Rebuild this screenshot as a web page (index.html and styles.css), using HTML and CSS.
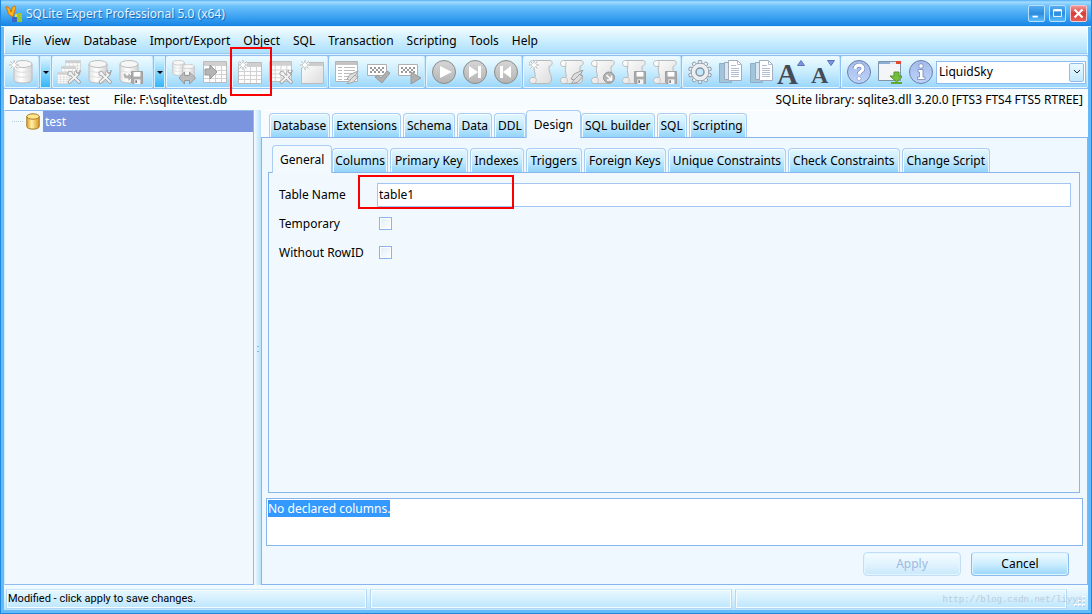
FILE: index.html
```html
<!DOCTYPE html>
<html lang="en">
<head>
<meta charset="utf-8">
<title>SQLite Expert Professional 5.0 (x64)</title>
<link rel="stylesheet" href="styles.css">
</head>
<body>
<svg class="defs" aria-hidden="true">
  <defs>
    <linearGradient id="steel" x1="0" x2="1" y1="0" y2="1"><stop offset="0" stop-color="#fff"/><stop offset="1" stop-color="#dcdcdc"/></linearGradient>
    <linearGradient id="metal" x1="0" x2="1" y1="0" y2="0"><stop offset="0" stop-color="#e2e2e2"/><stop offset=".4" stop-color="#fff"/><stop offset="1" stop-color="#d4d4d4"/></linearGradient>
    <linearGradient id="gold" x1="0" x2="1" y1="0" y2="0"><stop offset="0" stop-color="#e0a52e"/><stop offset=".4" stop-color="#fff0a8"/><stop offset="1" stop-color="#d9971c"/></linearGradient>
    <linearGradient id="round" x1="0" x2="0" y1="0" y2="1"><stop offset="0" stop-color="#d6d6d6"/><stop offset="1" stop-color="#b4b4b4"/></linearGradient>
    <linearGradient id="blue" x1="0" x2="0" y1="0" y2="1"><stop offset="0" stop-color="#a4bbea"/><stop offset="1" stop-color="#bdd3fa"/></linearGradient>
  </defs>
  <symbol id="spark" viewBox="0 0 10 10"><circle cx="5" cy="5" r="4.500" fill="#eef4f6"/><path d="M5 0v10M0 5h10M1.500 1.500l7 7M8.500 1.500l-7 7" stroke="#b4b8ba" stroke-width="1"/><circle cx="5" cy="5" r="2" fill="#fff"/></symbol>
  <symbol id="cyl" viewBox="0 0 20 24" preserveAspectRatio="none"><path d="M1 4v16c0 4 18 4 18 0V4z" fill="url(#metal)" stroke="#bcbcbc"/><ellipse cx="10" cy="4" rx="9" ry="3.500" fill="#f6f6f6" stroke="#bcbcbc"/><path d="M1.500 10c2 3 15 3 17 0M1.500 15c2 3 15 3 17 0" fill="none" stroke="#dcdcdc"/></symbol>
  <symbol id="tools" viewBox="0 0 14 14"><path d="M4 4l8 8M11 4l-8.500 8" stroke="#a0a0a0" stroke-width="3.600" stroke-linecap="round"/><path d="M1 2l3-1 2 3-2 2-3-1zM13 2l-2 2-2-2 1-1.500c-3 0-3 3-2 4.500 2 1 5 0 5-5z" fill="#eee" stroke="#a0a0a0" stroke-width=".8"/><path d="M4 4l8 8M10.500 4.500l-8 7.500" stroke="#f2f2f2" stroke-width="1.800" stroke-linecap="round"/></symbol>
  <symbol id="grid" viewBox="0 0 24 22" preserveAspectRatio="none"><path d="M.5.500h23v21H.5z" fill="#fdfdfd" stroke="#bcbcbc"/><path d="M1 1h22v4H1z" fill="#cfcfcf"/><path d="M1 9.500h22M1 13.500h22M1 17.500h22M6.500 1v20M12.500 1v20M18.500 1v20" stroke="#d2d2d2"/></symbol>
  <symbol id="floppy" viewBox="0 0 14 14" preserveAspectRatio="none"><path d="M.5.500h13v13H2l-1.500-1.500z" fill="#aaa" stroke="#999"/><path d="M3 1h8v5H3z" fill="#fff"/><path d="M4 9h7v5H4z" fill="#f4f4f4"/><path d="M5 10h2v3H5z" fill="#888"/></symbol>
  <symbol id="scroll" viewBox="0 0 24 24"><path d="M3.500.500H21c3 0 3 5-.5 5.500-2 4 2 9 2 13 0 3-2 4.500-4 4.500H3.500c-4 0-4-6 0-6H6C7 14 4 10 6 6.500H3.500c-4 0-4-6 0-6z" fill="url(#steel)" stroke="#b8b8b8"/><path d="M3.500 6.500c3 0 3-3 2-5M5 17.500c3 0 3 4 1 6" fill="none" stroke="#c4c4c4"/></symbol>
  <symbol id="bolt" viewBox="0 0 14 14"><path d="M13 0L4 4 1 9l3 1-3 4 7-2 5-6-3-1z" fill="#dedede" stroke="#a0a0a0"/><path d="M4 10l6-6" stroke="#a0a0a0"/></symbol>
  <symbol id="keys" viewBox="0 0 20 12"><path d="M.5.500h19v11H.5z" fill="#fff" stroke="#b0b0b0"/><path d="M3 4h14M3 8h14" stroke="#999" stroke-width="2" stroke-dasharray="2 2"/><path d="M5 6h12" stroke="#999" stroke-width="2" stroke-dasharray="2 2"/></symbol>
  <symbol id="copy" viewBox="0 0 24 24"><path d="M.5 3.500h12v19H.5z" fill="#a3c5dc" stroke="#8eaec5"/><path d="M5.500 2.500h11v17h-11z" fill="#dbe7f5" stroke="#9ca9bb"/><path d="M9.500.500h9l4 4v16h-13z" fill="#fff" stroke="#a3adbd"/><path d="M18.500.500v4h4M12 5.500h5M12 8.500h8M12 10.500h8M12 12.500h8M12 14.500h8M12 16.500h8" fill="none" stroke="#b3bdd6"/></symbol>
</svg>

<div class="window">
  <header class="titlebar">
    <svg class="logo" viewBox="0 0 18 18" aria-hidden="true"><path d="M1 2c3-1 4 2 5 5 1-3 1-6 4-6 2 2-1 5-1 8 0 2-1 3-3 2-3-1-3-5-5-9z" fill="#fcb51c" stroke="#d36c08"/><path d="M7 12h5v5H7z" fill="#3868c8"/><path d="M12 8h5v9h-5z" fill="#98c832"/><path d="M10 9h2v3h-2z" fill="#e7dc3d"/></svg>
    <h1>SQLite Expert Professional 5.0 (x64)</h1>
    <div class="winbtns">
      <button class="winbtn" aria-label="Minimize"><svg viewBox="0 0 17 17"><path d="M4 11h6v2H4z" fill="#fff"/></svg></button>
      <button class="winbtn" aria-label="Maximize"><svg viewBox="0 0 17 17"><path d="M4 5h9v7H4zM4 4h9" fill="none" stroke="#fff"/><path d="M4 4h9v2H4z" fill="#fff"/></svg></button>
      <button class="winbtn close" aria-label="Close"><svg viewBox="0 0 17 17"><path d="M4 4l9 9M13 4l-9 9" stroke="#fff" stroke-width="2.500"/></svg></button>
    </div>
  </header>

  <nav class="menubar">
    <button>File</button><button>View</button><button>Database</button><button>Import/Export</button><button>Object</button><button>SQL</button><button>Transaction</button><button>Scripting</button><button>Tools</button><button>Help</button>
  </nav>

  <div class="toolbar">
    <div class="group"><button class="tool" aria-label="New database"><svg viewBox="0 0 24 24"><use href="#cyl" x="4" width="20" height="24"/><use href="#spark" width="10" height="10"/></svg></button></div>
    <button class="drop" aria-label="More databases"></button>
    <div class="group wide">
      <button class="tool" aria-label="Close all"><svg viewBox="0 0 24 24"><use href="#grid" x="8" width="16" height="14"/><use href="#grid" x="4" y="6" width="15" height="13"/><use href="#grid" x="0" y="12" width="13" height="12"/><use href="#tools" x="10" y="10" width="14" height="14"/></svg></button>
      <button class="tool" aria-label="Close database"><svg viewBox="0 0 24 24"><use href="#cyl" width="20" height="24"/><use href="#tools" x="10" y="10" width="14" height="14"/></svg></button>
      <button class="tool" aria-label="Backup database"><svg viewBox="0 0 24 24"><use href="#cyl" width="20" height="24"/><path d="M4 13c0 5 1 6 5 6v3l5-5-5-5v3c-2 0-2 0-2-2z" fill="#b5b5b5" stroke="#fff"/><use href="#floppy" x="12" y="11" width="12" height="13"/></svg></button>
    </div>
    <button class="drop" aria-label="More backup options"></button>
    <div class="group">
      <button class="tool" aria-label="Transfer data"><svg viewBox="0 0 24 24"><use href="#cyl" width="13" height="16"/><use href="#cyl" x="10" y="4" width="13" height="15"/><path d="M7 18l5.500-6v3.500h5V12l6 6-6 6v-3.500h-5V24z" fill="#bdbdbd" stroke="#999"/></svg></button>
      <button class="tool" aria-label="Import table"><svg viewBox="0 0 24 24"><use href="#grid" y="1" width="24" height="22"/><path d="M2 9h5V5l7 7-7 7v-4H2z" fill="#b5b5b5" stroke="#999"/></svg></button>
    </div>
    <div class="group">
      <button class="tool" aria-label="New table"><svg viewBox="0 0 24 24"><use href="#grid" y="2" width="24" height="22"/><use href="#spark" width="10" height="10"/></svg></button>
      <button class="tool" aria-label="Delete table"><svg viewBox="0 0 24 24"><use href="#grid" y="1" width="23" height="21"/><use href="#tools" x="10" y="10" width="14" height="14"/></svg></button>
      <button class="tool" aria-label="New view"><svg viewBox="0 0 24 24"><path d="M1.500 2.500h22v21h-22z" fill="url(#steel)" stroke="#bcbcbc"/><path d="M2 3h21v3H2z" fill="#cdcdcd"/><use href="#spark" width="10" height="10"/></svg></button>
      <span class="mark mark-tool" aria-hidden="true"></span>
    </div>
    <div class="group">
      <button class="tool" aria-label="Edit data"><svg viewBox="0 0 24 24"><path d="M.5 1.500h22v20H.5z" fill="#fff" stroke="#b4b4b4"/><path d="M1 2h21v3H1z" fill="#c4c4c4"/><path d="M3 7.500h4M9 7.500h11M3 10.500h4M9 10.500h11M3 13.500h4M9 13.500h11M3 16.500h4M9 16.500h6M3 19.500h4M9 19.500h3" stroke="#bcbcbc"/><use href="#bolt" x="11" y="11" width="13" height="13"/></svg></button>
      <button class="tool" aria-label="Check query"><svg viewBox="0 0 24 24"><use href="#keys" x="1" y="4" width="20" height="12"/><path d="M9 17l3-2 3 3 6-7 3 2-8 10z" fill="#b0b0b0" stroke="#999"/></svg></button>
      <button class="tool" aria-label="Run query"><svg viewBox="0 0 24 24"><use href="#keys" x="1" y="4" width="20" height="12"/><path d="M14 12l10 6-10 6z" fill="#b0b0b0" stroke="#999"/></svg></button>
    </div>
    <div class="group">
      <button class="tool" aria-label="Run"><svg viewBox="0 0 24 24"><circle cx="12" cy="12" r="11.500" fill="url(#round)" stroke="#8c8c8c"/><path d="M8 6l12 6-12 6z" fill="#fff"/></svg></button>
      <button class="tool" aria-label="Commit"><svg viewBox="0 0 24 24"><circle cx="12" cy="12" r="11.500" fill="url(#round)" stroke="#8c8c8c"/><path d="M6 6l9 6-9 6zM15 6h3v12h-3z" fill="#fff"/></svg></button>
      <button class="tool" aria-label="Roll back"><svg viewBox="0 0 24 24"><circle cx="12" cy="12" r="11.500" fill="url(#round)" stroke="#8c8c8c"/><path d="M17 6l-8 6 8 6zM6 6h3v12H6z" fill="#fff"/></svg></button>
    </div>
    <div class="group">
      <button class="tool" aria-label="New script"><svg viewBox="0 0 24 24"><use href="#scroll" width="24" height="24"/><use href="#spark" width="10" height="10"/></svg></button>
      <button class="tool" aria-label="Execute script"><svg viewBox="0 0 24 24"><use href="#scroll" width="24" height="24"/><use href="#bolt" x="10" y="10" width="14" height="14"/></svg></button>
      <button class="tool" aria-label="Load script"><svg viewBox="0 0 24 24"><use href="#scroll" width="24" height="24"/><circle cx="18" cy="17.500" r="5.500" fill="#b4b4b4" stroke="#949494"/><path d="M15.500 15l4.500 4.500M20.500 15.500v4.500H16" fill="none" stroke="#fff" stroke-width="1.500"/></svg></button>
      <button class="tool" aria-label="Save script"><svg viewBox="0 0 24 24"><use href="#scroll" width="24" height="24"/><use href="#floppy" x="12" y="11" width="12" height="13"/></svg></button>
      <button class="tool" aria-label="Save script as"><svg viewBox="0 0 24 24"><use href="#scroll" width="24" height="24"/><use href="#floppy" x="12" y="11" width="12" height="13"/></svg></button>
    </div>
    <div class="group">
      <button class="tool" aria-label="Options"><svg viewBox="0 0 24 24"><g fill="#eceff2" stroke="#8e99a5" stroke-width=".9"><path id="tooth" d="M10 4l.5-3.500h3L14 4z"/><use href="#tooth" transform="rotate(36 12 12)"/><use href="#tooth" transform="rotate(72 12 12)"/><use href="#tooth" transform="rotate(108 12 12)"/><use href="#tooth" transform="rotate(144 12 12)"/><use href="#tooth" transform="rotate(180 12 12)"/><use href="#tooth" transform="rotate(216 12 12)"/><use href="#tooth" transform="rotate(252 12 12)"/><use href="#tooth" transform="rotate(288 12 12)"/><use href="#tooth" transform="rotate(324 12 12)"/><circle cx="12" cy="12" r="8.700"/></g><circle cx="12" cy="12" r="8.200" fill="#eceff2"/><circle cx="12" cy="12" r="4" fill="#c4e8fc" stroke="#8792a0" stroke-width="1.500"/></svg></button>
      <button class="tool" aria-label="Copy"><svg viewBox="0 0 24 24"><use href="#copy" width="24" height="24"/></svg></button>
      <button class="tool" aria-label="Duplicate"><svg viewBox="0 0 24 24"><use href="#copy" width="24" height="24"/></svg></button>
      <button class="tool font-btn" aria-label="Larger font"><span class="big-a">A</span><svg class="tri" viewBox="0 0 8 6"><path d="M4 .5l3.500 5h-7z" fill="#7d94dd" stroke="#5a72bc"/></svg></button>
      <button class="tool font-btn" aria-label="Smaller font"><span class="small-a">A</span><svg class="tri" viewBox="0 0 8 6"><path d="M4 5.500l3.500-5h-7z" fill="#7d94dd" stroke="#5a72bc"/></svg></button>
    </div>
    <div class="group last">
      <button class="tool" aria-label="Help"><svg viewBox="0 0 24 24"><circle cx="12" cy="12" r="11.500" fill="url(#blue)" stroke="#6980ab"/><path d="M8 9c0-5 8-5 8-.5 0 3-4 2.500-4 6" fill="none" stroke="#7088b8" stroke-width="4.500"/><path d="M8 9c0-5 8-5 8-.5 0 3-4 2.500-4 6" fill="none" stroke="#fff" stroke-width="3.200"/><circle cx="12" cy="18.500" r="2" fill="#fff" stroke="#7088b8" stroke-width=".5"/></svg></button>
      <button class="tool" aria-label="Check for updates"><svg viewBox="0 0 24 24"><path d="M.5 1.500h22v19H.5z" fill="#f3f5f9" stroke="#8294aa"/><path d="M1 2h21v2H1z" fill="#8eacd8"/><path d="M12 2h3v2h-3zM15 2h3v2h-3z" fill="#dfe8f6"/><path d="M18 1h5v3h-5z" fill="#e14a30"/><path d="M16 12h5v4h4l-6.500 6L12 16h4z" fill="#74bd3d" stroke="#4e972a"/><path d="M13 22h11v2H13z" fill="#63a832"/></svg></button>
      <button class="tool" aria-label="About"><svg viewBox="0 0 24 24"><circle cx="12" cy="12" r="11.500" fill="url(#blue)" stroke="#6980ab"/><path d="M9 9.500h5V17h2v2.500H8.500V17h2v-5H9z" fill="#fff" stroke="#7088b8" stroke-width=".8"/><circle cx="12" cy="6" r="2.300" fill="#fff" stroke="#7088b8" stroke-width=".8"/></svg></button>
      <div class="combo">
        <select aria-label="Skin"><option>LiquidSky</option></select>
        <span class="combo-arrow" aria-hidden="true"><svg viewBox="0 0 8 6"><path d="M1 1l3 3 3-3" fill="none" stroke="#222"/></svg></span>
      </div>
    </div>
  </div>

  <div class="info"><span>Database: test</span><span>File: F:\sqlite\test.db</span><span class="lib">SQLite library: sqlite3.dll 3.20.0 [FTS3 FTS4 FTS5 RTREE]</span></div>

  <main class="body">
    <aside class="tree">
      <div class="node"><span class="branch"></span><svg class="dbicon" viewBox="0 0 14 17" aria-hidden="true"><path d="M.8 3.500v10c0 3.500 12.400 3.500 12.400 0v-10z" fill="url(#gold)" stroke="#a87820"/><ellipse cx="7" cy="3.500" rx="6.200" ry="2.700" fill="#ffe68c" stroke="#a87820"/></svg><span class="node-label">test</span></div>
    </aside>
    <div class="splitter"></div>
    <section class="content">
      <div class="tabs main-tabs" role="tablist">
        <button class="tab" role="tab">Database</button><button class="tab" role="tab">Extensions</button><button class="tab" role="tab">Schema</button><button class="tab" role="tab">Data</button><button class="tab" role="tab">DDL</button><button class="tab active" role="tab" aria-selected="true">Design</button><button class="tab" role="tab">SQL builder</button><button class="tab" role="tab">SQL</button><button class="tab" role="tab">Scripting</button>
      </div>
      <div class="design">
        <div class="tabs sub-tabs" role="tablist">
          <button class="tab active" role="tab" aria-selected="true">General</button><button class="tab" role="tab">Columns</button><button class="tab" role="tab">Primary Key</button><button class="tab" role="tab">Indexes</button><button class="tab" role="tab">Triggers</button><button class="tab" role="tab">Foreign Keys</button><button class="tab" role="tab">Unique Constraints</button><button class="tab" role="tab">Check Constraints</button><button class="tab" role="tab">Change Script</button>
        </div>
        <form class="general">
          <div class="row"><label for="tname">Table Name</label><div class="field"><input id="tname" type="text" value="table1"><span class="mark mark-name" aria-hidden="true"></span></div></div>
          <div class="row"><label for="temp">Temporary</label><input id="temp" type="checkbox"></div>
          <div class="row"><label for="norow">Without RowID</label><input id="norow" type="checkbox"></div>
        </form>
        <div class="messages"><span>No declared columns.</span></div>
        <div class="actions"><button class="btn" disabled>Apply</button><button class="btn">Cancel</button></div>
      </div>
    </section>
  </main>

  <footer class="status"><div>Modified - click apply to save changes.</div><div></div><div></div>
    <svg class="grip" viewBox="0 0 12 12" aria-hidden="true"><path d="M8 1h3M4 5h3M8 5h3M0 9h3M4 9h3M8 9h3" stroke="#fff" stroke-width="2"/><path d="M9 2h2M5 6h2M9 6h2M1 10h2M5 10h2M9 10h2" stroke="#8bbfea" stroke-width="1"/></svg>
    <span class="watermark">http://blog.csdn.net/liyys</span>
  </footer>
</div>
</body>
</html>
```
FILE: styles.css
```css
* { box-sizing: border-box; }
body { margin: 0; font: 12px/16px "Noto Sans", "Open Sans", sans-serif; color: #000; }
button, input, select { font: inherit; color: inherit; margin: 0; }
button { border: 0; background: none; padding: 0; white-space: nowrap; }
.defs { position: absolute; width: 0; height: 0; }

.window { height: 100vh; display: flex; flex-direction: column; border: solid #1f87dd; border-width: 0 1px 1px; box-shadow: inset 0 0 0 3px #64bbfb; padding: 0 3px 3px; background: #f7fcff; overflow: hidden; }

.titlebar { height: 27px; flex: none; margin: 0 -3px; display: flex; align-items: center; gap: 3px; padding: 0 4px; background: linear-gradient(#52aef5 0, #a3dcff 2px, #6cc1fb 6px, #389ff0 18px, #1684e6 26px, #d9f3ff 26px); }
.logo { width: 18px; height: 18px; }
.titlebar h1 { flex: 1; margin: 0; font-size: 12px; font-weight: 400; color: #e2f3ff; text-shadow: 1px 1px 1px #1263ae; }
.winbtns { display: flex; gap: 4px; }
.winbtn { width: 17px; height: 17px; border: 1px solid #b6e0ff; border-radius: 2px; background: linear-gradient(#55adf2, #2c8ce0 50%, #58bdf8); }
.winbtn svg { display: block; width: 15px; height: 15px; }
.winbtn.close { border-color: #f5c8cc; background: linear-gradient(#f09a98, #d93a35 50%, #e8605a); }

.menubar { height: 27px; flex: none; display: flex; align-items: center; gap: 13px; padding: 1px 7px 0; border: 1px solid #fff; border-bottom-color: #9cc8f2; background: linear-gradient(#f0fbff, #cdeefe 50%, #abdffc); }

.toolbar { height: 35px; flex: none; display: flex; align-items: stretch; padding: 1px 0; gap: 1px; background: #8fc0f1; border-top: 1px solid #d9f1ff; }
.group { position: relative; display: flex; align-items: center; padding: 0 0 0 1px; border: 1px solid #e6f7ff; border-right-color: #c6e9ff; border-radius: 2px; background: linear-gradient(#eefbff, #c9ecfe 50%, #9bd7fb); }
.group:first-child { padding: 0 2px 0 0; }
.group.wide { padding: 0 6px 0 0; }
.group.last { flex: 1; padding-right: 1px; }
.tool { width: 31px; height: 30px; display: grid; place-items: center; }
.tool svg { width: 24px; height: 24px; }
.drop { width: 11px; display: grid; place-items: center; border: 1px solid #d0f0ff; background: linear-gradient(#dff6ff, #86d5fc 50%, #35b6fa); }
.drop::before { content: ""; border: 3px solid transparent; border-top-color: #000; border-bottom: 0; }
.font-btn { display: flex; justify-content: flex-start; align-items: baseline; color: #444b57; font-family: "Liberation Serif", serif; font-weight: 700; }
.tool.font-btn .tri { width: 8px; height: 6px; align-self: flex-start; margin: 3px 0 0 -1px; }
.big-a { font-size: 29px; line-height: 34px; }
.small-a { font-size: 24px; line-height: 37px; margin-left: 3px; }
.combo { position: relative; flex: 1; height: 23px; }
.combo select { width: 100%; height: 23px; appearance: none; padding: 0 20px 0 2px; border: 1px solid #8fbcf0; border-radius: 0; background: #fff; }
.combo-arrow { position: absolute; top: 2px; right: 2px; width: 15px; height: 19px; display: grid; place-items: center; border: 1px solid #8fbcf0; border-radius: 2px; background: linear-gradient(#eafaff, #c2e8fe); pointer-events: none; }
.combo-arrow svg { width: 8px; height: 6px; }

.info { height: 21px; flex: none; display: flex; align-items: center; gap: 24px; padding: 0 5px; }
.info .lib { margin-left: auto; }

.body { flex: 1; min-height: 0; display: grid; grid-template-columns: 250px 7px 1fr; background: #f0f8ff; }
.tree { border: 1px solid #8fbcf0; border-left-color: #d0e8fb; background: #f1f9ff; }
.node { display: flex; align-items: center; height: 21px; gap: 3px; }
.branch { width: 11px; margin-left: 7px; border-top: 1px dotted #b5cfe2; }
.node .dbicon { width: 14px; height: 17px; }
.node-label { flex: 1; height: 21px; padding: 2px; line-height: 17px; background: #7b95df; color: #fff; }
.splitter { background: linear-gradient(90deg, #f3fbff, #b9e1fb); }
.splitter::before { content: ""; display: block; height: 4px; width: 2px; margin: 236px 3px 0; border-top: 1px solid #7fb8e8; border-bottom: 1px solid #7fb8e8; }

.content { min-width: 0; display: flex; flex-direction: column; background: #f8fcff; border-top: 1px solid #fff; }
.tabs { display: flex; align-items: flex-end; gap: 2px; flex: none; }
.tab { flex: none; height: 24px; padding: 0 4px; border: 1px solid #a9cdf3; border-bottom: 0; border-radius: 4px 4px 0 0; background: linear-gradient(#e4f7ff, #c7ebfe 50%, #92d4fb); box-shadow: inset 1px 1px 0 #f5fcff, inset -1px 0 0 #e5f6ff; }
.main-tabs .tab { padding: 0 3px; }
.sub-tabs .active + .tab { padding: 0 2px; }
.tabs .tab.active { height: 28px; padding: 0 7px; margin: 0 -2px -1px; position: relative; background: #f3faff; box-shadow: none; }
.main-tabs { height: 26px; padding-left: 8px; }
.design { flex: 1; min-height: 0; display: flex; flex-direction: column; padding: 7px 4px 0; border: 1px solid #8ab5ec; background: #f0f8ff; }
.sub-tabs { height: 27px; padding-left: 8px; }
.general { flex: 1; margin: 0 3px 0 2px; padding: 10px 8px 8px 10px; border: 1px solid #8ab5ec; background: #f1f9ff; display: flex; flex-direction: column; gap: 6px; }
.row { display: grid; grid-template-columns: 98px 1fr; align-items: center; height: 23px; }
.field { position: relative; }
.field input { display: block; width: 100%; height: 24px; padding: 0 1px 2px; border: 1px solid #a3c5f1; background: #fff; }
.row input[type="checkbox"] { appearance: none; width: 13px; height: 13px; margin-left: 2px; border: 1px solid #8ab5ec; background: linear-gradient(135deg, #dceefa, #fff); box-shadow: inset 0 0 0 1px #fff; }
.messages { height: 48px; flex: none; margin-top: 5px; padding: 1px; border: 1px solid #8ab5ec; background: #fff; }
.messages span { display: inline-block; height: 17px; line-height: 18px; background: #3399ff; color: #fff; }
.actions { flex: none; display: flex; justify-content: flex-end; gap: 10px; padding: 6px 14px 8px; }
.btn { width: 98px; height: 24px; border: 1px solid #8ab9ec; border-top-color: #bfe0fa; border-radius: 4px; background: linear-gradient(#f0fbff, #cdeefe 50%, #97d6fb); box-shadow: inset 0 0 0 1px #e2f6ff; }
.btn:disabled { border-color: #c6def5; background: linear-gradient(#f5fcff, #e2f4fe 50%, #c8e8fb); color: #9db9e3; }

.status { position: relative; height: 25px; flex: none; display: grid; grid-template-columns: 361fr 361fr 332fr; gap: 3px; padding: 3px 21px 1px 2px; border-top: 1px solid #f0fbff; background: linear-gradient(#f3fcff, #b8e4fd); font: 11px/17px Roboto, "Noto Sans", sans-serif; }
.status > div { padding: 0 1px; border: 1px solid #b5d8f6; border-top-color: #cfe8fa; box-shadow: inset -1px -1px 0 #f4fcff, inset 1px 1px 0 #f4fcff; }
.grip { position: absolute; right: 2px; bottom: 2px; width: 12px; height: 12px; }
.watermark { position: absolute; right: 5px; top: 7px; font: 9px/14px "Liberation Mono", monospace; color: #b9cbd8; }

.mark { position: absolute; border: 2px solid #fa0000; pointer-events: none; z-index: 5; }
.mark-tool { left: -3px; top: -10px; width: 42px; height: 49px; }
.mark-name { left: -19px; top: -8px; width: 156px; height: 34px; }
```
